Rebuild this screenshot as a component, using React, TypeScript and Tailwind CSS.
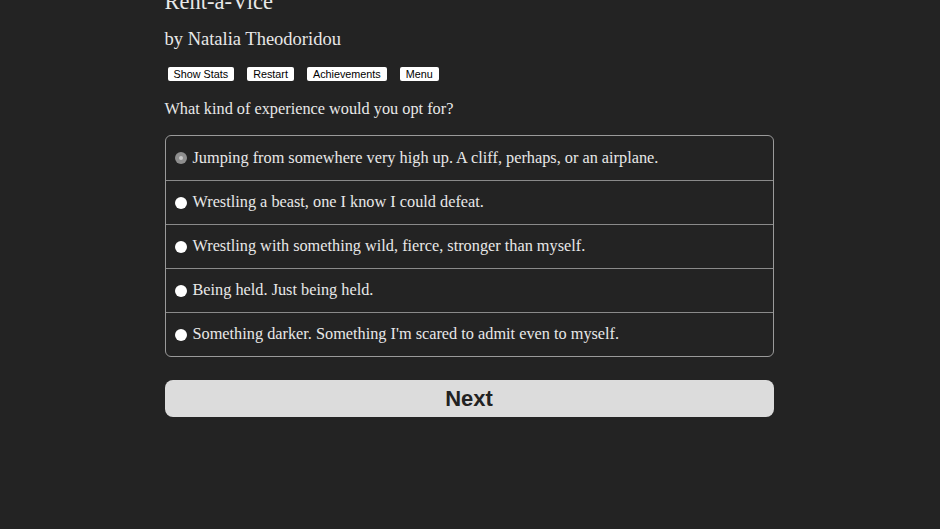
import React, { useState } from 'react';

const options = [
  'Jumping from somewhere very high up. A cliff, perhaps, or an airplane.',
  'Wrestling a beast, one I know I could defeat.',
  'Wrestling with something wild, fierce, stronger than myself.',
  'Being held. Just being held.',
  "Something darker. Something I'm scared to admit even to myself.",
];

const serif = "font-['Liberation_Serif','DejaVu_Serif',serif]";
const sans = "font-['Liberation_Sans',Arial,sans-serif]";

function Radio({ checked }: { checked: boolean }) {
  if (checked) {
    return (
      <span className="flex h-[12px] w-[12px] shrink-0 items-center justify-center rounded-full bg-[#8e8e8e]">
        <span className="h-[4px] w-[4px] rounded-full bg-[#c8c8c8]" />
      </span>
    );
  }
  return <span className="h-[12px] w-[12px] shrink-0 rounded-full bg-white" />;
}

export default function App() {
  const [selected, setSelected] = useState(0);
  const menu = ['Show Stats', 'Restart', 'Achievements', 'Menu'];

  return (
    <div className={`min-h-[529px] w-full overflow-hidden bg-[#232323] text-[#e8e8e8] ${serif}`}>
      <div className="mx-auto -mt-[12px] w-[609px] -translate-x-[1px]">
        {/* 标题被截在顶部 */}
        <h1 className="text-[22.5px] leading-[28px]">Rent-a-Vice</h1>
        <p className="mt-[11px] text-[18.5px] leading-[24px]">by Natalia Theodoridou</p>

        <div className="mt-[16px] flex gap-[13px] pl-[3px]">
          {menu.map((m) => (
            <button
              key={m}
              className={`h-[14px] rounded-[2px] bg-white px-[6px] text-[10.8px] leading-[14px] text-black ${sans}`}
            >
              {m}
            </button>
          ))}
        </div>

        <p className="mt-[17px] text-[16.3px] leading-[22px]">What kind of experience would you opt for?</p>

        <div className="mt-[15px] rounded-[6px] border border-[#9a9a9a]">
          {options.map((o, i) => (
            <label
              key={o}
              onClick={() => setSelected(i)}
              className={`flex h-[44px] cursor-pointer items-center gap-[6px] pl-[9px] text-[16.3px] ${
                i > 0 ? 'border-t border-[#8a8a8a]' : ''
              }`}
            >
              <Radio checked={selected === i} />
              <span>{o}</span>
            </label>
          ))}
        </div>

        <button
          className={`mt-[23px] h-[37px] w-full rounded-[8px] bg-[#dcdcdc] text-[22px] font-bold text-[#222] ${sans}`}
        >
          Next
        </button>
      </div>
    </div>
  );
}
